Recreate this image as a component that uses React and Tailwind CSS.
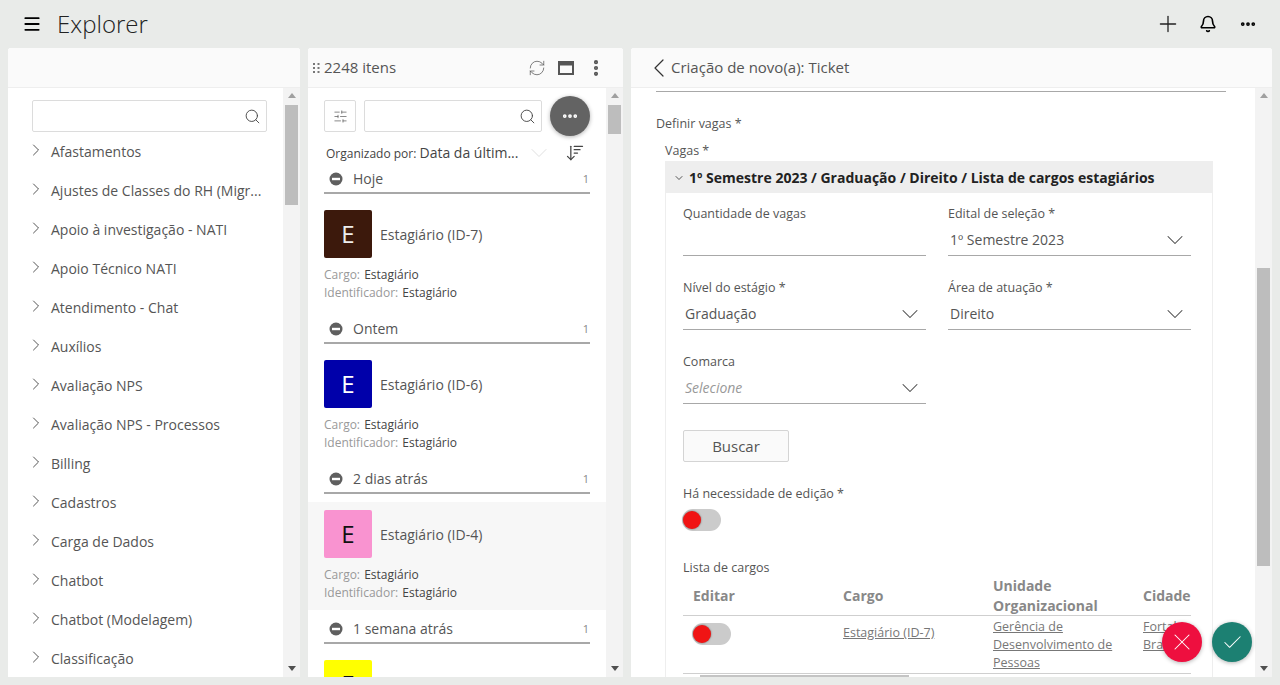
import React from "react";
import { Menu, Plus, Bell, MoreHorizontal, MoreVertical, Search, SlidersHorizontal, ChevronRight, ChevronDown, ChevronLeft, RefreshCw, ArrowDownWideNarrow, X, Check } from "lucide-react";

const tree = ["Afastamentos","Ajustes de Classes do RH (Migr...","Apoio à investigação - NATI","Apoio Técnico NATI","Atendimento - Chat","Auxílios","Avaliação NPS","Avaliação NPS - Processos","Billing","Cadastros","Carga de Dados","Chatbot","Chatbot (Modelagem)","Classificação"];

function Scrollbar({ top, height }) {
  return (
    <div className="relative shrink-0 w-[17px] bg-[#f3f3f3]">
      <div className="absolute left-[5px] top-[5px] w-0 h-0 border-x-[4px] border-x-transparent border-b-[5px] border-b-[#a0a0a0]" />
      <div className="absolute left-[2px] right-[2px] bg-[#bdbdbd]" style={{ top, height }} />
      <div className="absolute left-[5px] bottom-[6px] w-0 h-0 border-x-[4px] border-x-transparent border-t-[5px] border-t-[#505050]" />
    </div>
  );
}

function SearchBox({ className }) {
  return (
    <div className={"h-8 bg-white border border-[#dcdcdc] rounded-[2px] flex items-center justify-end pr-[5px] " + className}>
      <Search size={17} strokeWidth={1.3} className="text-[#444]" />
    </div>
  );
}

function Group({ label }) {
  return (
    <div className="mx-4 h-[28px] border-b-2 border-[#a8a8a8] flex items-center pl-[5px] pr-[1px] shrink-0 text-sm text-[#555]">
      <svg width="14" height="14" viewBox="0 0 14 14" className="mr-[10px] shrink-0">
        <circle cx="7" cy="7" r="6.5" fill="#5f5f5f" />
        <rect x="3" y="5.8" width="8" height="2.4" fill="#fff" />
      </svg>
      <span className="flex-1">{label}</span>
      <span className="text-[11px] text-[#888]">1</span>
    </div>
  );
}

function Card({ color, fg, id, active }) {
  return (
    <div className={"shrink-0 h-[108px] px-4 pt-2 " + (active ? "bg-[#f7f7f7]" : "bg-white")}>
      <div className="flex items-center gap-2">
        <div className="w-12 h-12 rounded-[2px] flex items-center justify-center text-2xl" style={{ backgroundColor: color, color: fg }}>E</div>
        <span className="text-sm text-[#555] pt-[2px]">Estagiário ({id})</span>
      </div>
      <div className="mt-2 text-xs leading-[18px] text-[#999]">Cargo: <span className="ml-[1px] text-[#444]">Estagiário</span></div>
      <div className="text-xs leading-[18px] text-[#999]">Identificador: <span className="ml-[1px] text-[#444]">Estagiário</span></div>
    </div>
  );
}

function Field({ label, value, placeholder, select }) {
  return (
    <div className="h-[74px]">
      <div className="h-[20px] text-[12.5px] leading-[20px] text-[#555] mt-[-1px]">{label}</div>
      <div className="h-[32px] border-b border-[#a8a8a8] flex items-end justify-between pl-[2px] pr-[2px] pb-[3px]">
        <span className={placeholder ? "text-sm italic text-[#999] leading-[24px]" : "text-sm text-[#555] leading-[24px]"}>{value || placeholder}</span>
        {select && <ChevronDown size={28} strokeWidth={0.9} className="text-[#444] -my-[2px]" />}
      </div>
    </div>
  );
}

function Toggle() {
  return (
    <div className="relative w-[39px] h-[22px] rounded-full bg-[#cbcbcb]">
      <div className="absolute left-[1px] top-[2px] w-[18px] h-[18px] rounded-full bg-[#f01414] shadow-[0_0_2px_rgba(0,0,0,0.5)]" />
    </div>
  );
}

export default function App() {
  return (
    <div className="h-screen flex flex-col overflow-hidden bg-[#e9ebe9] font-['Open_Sans',sans-serif]">
      <header className="h-12 shrink-0 flex items-center pl-[22px] pr-[23px]">
        <Menu size={20} strokeWidth={2.2} className="text-black" />
        <h1 className="ml-[15px] text-2xl font-light text-[#222]">Explorer</h1>
        <div className="ml-auto flex items-center">
          <Plus size={26} strokeWidth={1.2} className="text-[#222]" />
          <Bell size={18} strokeWidth={2.2} className="ml-[18px] text-black" />
          <MoreHorizontal size={18} strokeWidth={3} className="ml-[22px] text-black" />
        </div>
      </header>

      <div className="flex-1 min-h-0 flex gap-2 px-2 pb-2">
        <section className="w-[292px] shrink-0 flex flex-col bg-white rounded-t-[3px] overflow-hidden">
          <div className="h-10 shrink-0 bg-[#fafafa] border-b border-[#eeeeee]" />
          <div className="flex-1 min-h-0 flex">
            <div className="flex-1 min-w-0 overflow-hidden pt-3 px-6">
              <SearchBox className="w-[235px]" />
              <ul>
                {tree.map((t) => (
                  <li key={t} className="h-[39px] flex items-center text-sm text-[#555] whitespace-nowrap">
                    <ChevronRight size={20} strokeWidth={1} className="mr-[5px] ml-[-6px] shrink-0 text-[#333] -translate-y-[2px]" />
                    {t}
                  </li>
                ))}
              </ul>
            </div>
            <Scrollbar top={17} height={100} />
          </div>
        </section>

        <section className="w-[315px] shrink-0 flex flex-col bg-white rounded-t-[3px] overflow-hidden">
          <div className="h-10 shrink-0 bg-[#fafafa] border-b border-[#eeeeee] flex items-center pl-[5px] pr-[17px]">
            <svg width="7" height="10" viewBox="0 0 7 10" className="mr-[4px] fill-[#777]">
              {[0,4,8].map(y => <g key={y}><rect x="0" y={y} width="2" height="2" /><rect x="4.5" y={y} width="2" height="2" /></g>)}
            </svg>
            <span className="text-[15px] text-[#555]">2248 itens</span>
            <RefreshCw size={18} strokeWidth={1} className="ml-auto text-[#555]" />
            <svg width="16" height="14" viewBox="0 0 16 14" className="ml-[12px]">
              <rect x="1" y="1" width="14" height="12" fill="none" stroke="#555" strokeWidth="2" />
              <rect x="1" y="1" width="14" height="3.5" fill="#555" />
            </svg>
            <MoreVertical size={20} strokeWidth={3} className="ml-[12px] text-[#555]" />
          </div>
          <div className="flex-1 min-h-0 flex">
            <div className="flex-1 min-w-0 overflow-hidden flex flex-col">
              <div className="shrink-0 pl-4 pr-4 pt-[8px] h-[48px] flex items-center gap-2">
                <div className="w-8 h-8 shrink-0 border border-[#dcdcdc] rounded-[2px] flex items-center justify-center">
                  <SlidersHorizontal size={15} strokeWidth={1.1} className="text-[#555]" />
                </div>
                <SearchBox className="w-[178px]" />
                <div className="w-10 h-10 shrink-0 rounded-full bg-[#636363] shadow-[0_1px_4px_rgba(0,0,0,0.3)] flex items-center justify-center">
                  <MoreHorizontal size={18} strokeWidth={3} className="text-white" />
                </div>
              </div>
              <div className="shrink-0 h-[30px] pt-[3px] pl-[18px] pr-[21px] flex items-center text-xs text-[#444]">
                <span className="whitespace-nowrap">Organizado por: <span className="text-sm">Data da últim...</span></span>
                <ChevronDown size={28} strokeWidth={0.8} className="ml-[7px] text-[#ddd]" />
                <ArrowDownWideNarrow size={20} strokeWidth={1.5} className="ml-auto text-[#444]" />
              </div>
              <Group label="Hoje" />
              <div className="h-2 shrink-0" />
              <Card color="#3c190c" fg="#eeeeee" id="ID-7" />
              <div className="h-[6px] shrink-0" />
              <Group label="Ontem" />
              <div className="h-2 shrink-0" />
              <Card color="#0000aa" fg="#ffffff" id="ID-6" />
              <div className="h-[6px] shrink-0" />
              <Group label="2 dias atrás" />
              <div className="h-2 shrink-0" />
              <Card color="#f993d0" fg="#111111" id="ID-4" active />
              <div className="h-[6px] shrink-0" />
              <Group label="1 semana atrás" />
              <div className="h-2 shrink-0" />
              <div className="shrink-0 px-4 pt-2">
                <div className="w-12 h-12 rounded-[2px] bg-[#ffff00] flex items-center justify-center text-2xl text-[#111]">E</div>
              </div>
            </div>
            <Scrollbar top={17} height={29} />
          </div>
        </section>

        <section className="relative flex-1 min-w-0 flex flex-col bg-white rounded-t-[3px] overflow-hidden">
          <div className="h-10 shrink-0 bg-[#fafafa] border-b border-[#eeeeee] flex items-center pl-3 text-[15px] text-[#555]">
            <ChevronLeft size={32} strokeWidth={0.9} className="-mr-1 text-[#333]" />
            Criação de novo(a): Ticket
          </div>
          <div className="flex-1 min-h-0 flex">
            <div className="flex-1 min-w-0 overflow-hidden pl-[25px] pr-[29px]">
              <div className="h-[4px] border-b border-[#a8a8a8]" />
              <div className="mt-[23px] text-[12.5px] leading-[18px] text-[#555]">Definir vagas *</div>
              <div className="mt-[9px] ml-[9px] text-[12.5px] leading-[18px] text-[#555]">Vagas *</div>
              <div className="ml-[9px] mr-[13px] mt-[1px] border-x border-[#eeeeee]">
                <div className="h-8 bg-[#eeeeee] flex items-center pl-[6px] pt-[1px] text-sm font-bold text-[#222] whitespace-nowrap">
                  <ChevronDown size={12} strokeWidth={1.5} className="mr-[4px] ml-[1px]" />
                  1º Semestre 2023 / Graduação / Direito / Lista de cargos estagiários
                </div>
                <div className="pl-[17px] pr-[21px] pt-[12px]">
                  <div className="grid grid-cols-2 gap-x-[22px]">
                    <Field label="Quantidade de vagas" />
                    <Field label="Edital de seleção *" value="1º Semestre 2023" select />
                    <Field label="Nível do estágio *" value="Graduação" select />
                    <Field label="Área de atuação *" value="Direito" select />
                    <Field label="Comarca" placeholder="Selecione" select />
                  </div>
                  <button className="block mt-[3px] w-[106px] h-8 bg-[#fafafa] border border-[#d4d4d4] rounded-[2px] text-[15px] text-[#555]">Buscar</button>
                  <div className="mt-[23px] text-[12.5px] leading-[18px] text-[#555]">Há necessidade de edição *</div>
                  <div className="mt-[6px] -ml-[1px]"><Toggle /></div>
                  <div className="mt-[28px] text-[12.5px] leading-[18px] text-[#555]">Lista de cargos</div>
                  <div className="overflow-hidden">
                    <div className="grid grid-cols-[150px_150px_150px_150px] w-[600px] h-[39px] -mt-[1px] items-center pl-[10px] text-sm font-bold text-[#888] leading-[20px]">
                      <span>Editar</span>
                      <span>Cargo</span>
                      <span>Unidade<br />Organizacional</span>
                      <span>Cidade</span>
                    </div>
                    <div className="border-t border-[#cfcfcf] border-b h-[59px]">
                      <div className="grid grid-cols-[150px_150px_150px_150px] w-[600px] pl-[10px] text-[12.5px] leading-[18px] text-[#777] underline">
                        <div className="pt-[7px] -ml-[1px]"><Toggle /></div>
                        <div className="pt-[8px]">Estagiário (ID-7)</div>
                        <div className="w-[130px] pt-[2px]">Gerência de Desenvolvimento de Pessoas</div>
                        <div className="pt-[2px]">Fortaleza<br />Brasil</div>
                      </div>
                    </div>
                    <div className="h-[3px] ml-[17px] w-[209px] bg-[#c4c4c4] mt-[1px]" />
                  </div>
                </div>
              </div>
            </div>
            <Scrollbar top={180} height={298} />
          </div>
          <div className="absolute right-[70px] bottom-[15px] w-10 h-10 rounded-full bg-[#ee0f3f] shadow-[0_1px_4px_rgba(0,0,0,0.3)] flex items-center justify-center">
            <X size={28} strokeWidth={0.9} className="text-white" />
          </div>
          <div className="absolute right-[20px] bottom-[15px] w-10 h-10 rounded-full bg-[#1c8072] shadow-[0_1px_4px_rgba(0,0,0,0.3)] flex items-center justify-center">
            <Check size={23} strokeWidth={1.1} className="text-white" />
          </div>
        </section>
      </div>
    </div>
  );
}
